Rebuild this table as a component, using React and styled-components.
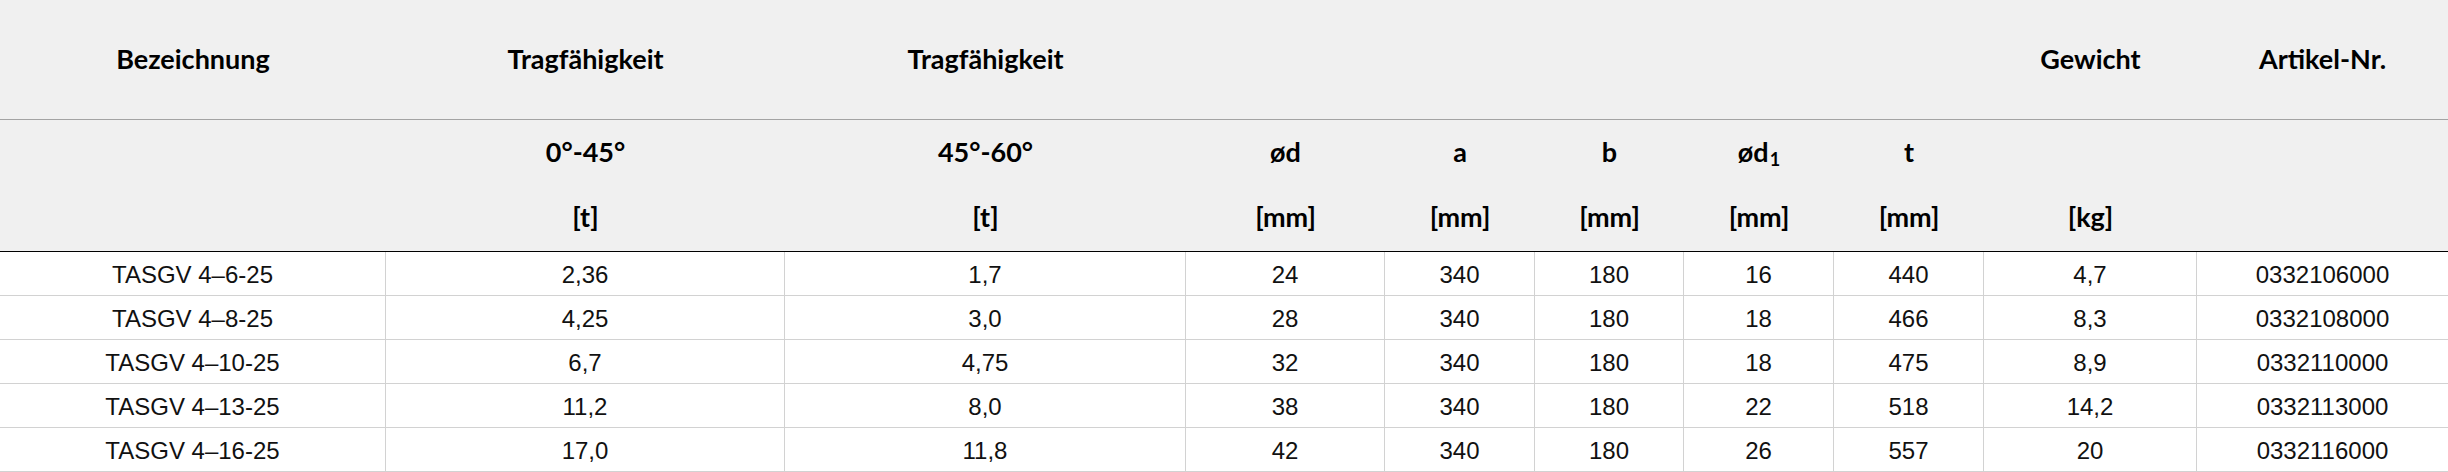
import React from 'react';
import styled, { createGlobalStyle } from 'styled-components';

const GlobalStyle = createGlobalStyle`
  * {
    box-sizing: border-box;
  }

  html,
  body {
    margin: 0;
    padding: 0;
    background: #ffffff;
  }
`;

const COLUMNS = '386px 399px 401px 199px 150px 149px 150px 150px 213px 251px';

const Table = styled.div`
  width: 2448px;
  display: flex;
  flex-direction: column;
`;

const Head = styled.div`
  background: #f0f0f0;
  display: flex;
  flex-direction: column;
`;

const HeadRow = styled.div`
  display: grid;
  grid-template-columns: ${COLUMNS};
  height: ${props => props.height}px;
  border-bottom: ${props => (props.rule ? `1px solid ${props.rule}` : 'none')};
`;

const HeadCell = styled.div`
  display: flex;
  align-items: center;
  justify-content: center;
  padding-bottom: ${props => props.lift || 0}px;
  font-family: Lato, 'Liberation Sans', sans-serif;
  font-weight: 700;
  font-size: 27px;
  color: #000000;
  white-space: nowrap;

  sub {
    font-size: 18px;
    line-height: 0;
    position: relative;
    top: 8px;
    vertical-align: baseline;
    margin-left: 1px;
  }
`;

const BodyRow = styled.div`
  display: grid;
  grid-template-columns: ${COLUMNS};
  height: 44px;
  border-bottom: 1px solid #d2d2d2;
`;

const Cell = styled.div`
  display: flex;
  align-items: center;
  justify-content: center;
  padding-top: 3px;
  font-family: 'Liberation Sans', Arial, sans-serif;
  font-size: 24px;
  color: #111111;
  white-space: nowrap;
  border-right: 1px solid #d2d2d2;

  &:last-child {
    border-right: none;
  }
`;

const titles = ['Bezeichnung', 'Tragfähigkeit', 'Tragfähigkeit', '', '', '', '', '', 'Gewicht', 'Artikel-Nr.'];

const symbols = [
  '',
  '0°-45°',
  '45°-60°',
  'ød',
  'a',
  'b',
  <>ød<sub>1</sub></>,
  't',
  '',
  '',
];

const units = ['', '[t]', '[t]', '[mm]', '[mm]', '[mm]', '[mm]', '[mm]', '[kg]', ''];

const rows = [
  ['TASGV 4–6-25', '2,36', '1,7', '24', '340', '180', '16', '440', '4,7', '0332106000'],
  ['TASGV 4–8-25', '4,25', '3,0', '28', '340', '180', '18', '466', '8,3', '0332108000'],
  ['TASGV 4–10-25', '6,7', '4,75', '32', '340', '180', '18', '475', '8,9', '0332110000'],
  ['TASGV 4–13-25', '11,2', '8,0', '38', '340', '180', '22', '518', '14,2', '0332113000'],
  ['TASGV 4–16-25', '17,0', '11,8', '42', '340', '180', '26', '557', '20', '0332116000'],
];

const App = () => (
  <>
    <GlobalStyle />
    <Table>
      <Head>
        <HeadRow height={120} rule="#a3a3a3">
          {titles.map((t, i) => (
            <HeadCell key={i} lift={2}>{t}</HeadCell>
          ))}
        </HeadRow>
        <HeadRow height={65}>
          {symbols.map((s, i) => (
            <HeadCell key={i} lift={3}>{s}</HeadCell>
          ))}
        </HeadRow>
        <HeadRow height={67} rule="#000000">
          {units.map((u, i) => (
            <HeadCell key={i} lift={4}>{u}</HeadCell>
          ))}
        </HeadRow>
      </Head>
      {rows.map(row => (
        <BodyRow key={row[0]}>
          {row.map((value, i) => (
            <Cell key={i}>{value}</Cell>
          ))}
        </BodyRow>
      ))}
    </Table>
  </>
);

export default App;
